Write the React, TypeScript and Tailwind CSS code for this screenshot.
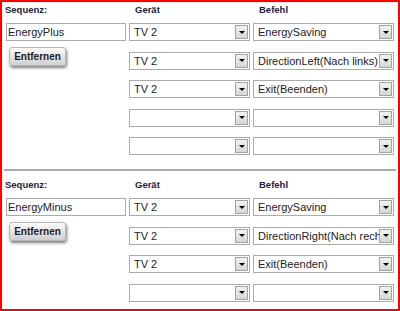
import React from "react";

type Section = {
  name: string;
  rows: { device: string; command: string }[];
};

const sections: Section[] = [
  {
    name: "EnergyPlus",
    rows: [
      { device: "TV 2", command: "EnergySaving" },
      { device: "TV 2", command: "DirectionLeft(Nach links)" },
      { device: "TV 2", command: "Exit(Beenden)" },
      { device: "", command: "" },
      { device: "", command: "" },
    ],
  },
  {
    name: "EnergyMinus",
    rows: [
      { device: "TV 2", command: "EnergySaving" },
      { device: "TV 2", command: "DirectionRight(Nach rechts)" },
      { device: "TV 2", command: "Exit(Beenden)" },
      { device: "", command: "" },
    ],
  },
];

const Header = ({ label, indent }: { label: string; indent: string }) => (
  <div
    className={`h-[21px] pt-[2px] text-[9.5px] font-bold leading-[12px] text-[#1c2340] ${indent}`}
  >
    {label}
  </div>
);

const Select = ({ value }: { value: string }) => (
  <div className="flex h-[18px] items-center border border-[#ababab] bg-white">
    <span className="flex-1 overflow-hidden whitespace-nowrap pl-[4px] text-[11px] leading-[16px] text-[#222]">
      {value}
    </span>
    <span className="mr-[1px] flex h-[14px] w-[13px] shrink-0 items-center justify-center border border-[#a3a3a3] bg-gradient-to-b from-[#f2f2f2] to-[#d6d6d6]">
      <span className="h-0 w-0 border-x-[3px] border-t-[3px] border-x-transparent border-t-black" />
    </span>
  </div>
);

const Block = ({ section }: { section: Section }) => (
  <div className="flex gap-[3px] pl-[4px]">
    <div className="flex w-[120px] flex-col">
      <Header label="Sequenz:" indent="-ml-[1px]" />
      <div className="flex h-[18px] items-center border border-[#ababab] bg-white pl-[1px] text-[11px] leading-[16px] text-[#222]">
        {section.name}
      </div>
      <button className="ml-[3px] mt-[6px] h-[19px] w-[57px] rounded-[3px] border border-[#b8b8b8] bg-gradient-to-b from-[#fbfbfb] to-[#cfcfcf] text-[10px] font-bold leading-[15px] text-[#222] shadow-[1px_2px_3px_rgba(0,0,0,0.5)]">
        Entfernen
      </button>
    </div>
    <div className="flex w-[121px] flex-col">
      <Header label="Gerät" indent="pl-[6px]" />
      <div className="flex flex-col gap-[10.5px]">
        {section.rows.map((r, i) => (
          <Select key={i} value={r.device} />
        ))}
      </div>
    </div>
    <div className="flex w-[141px] flex-col">
      <Header label="Befehl" indent="pl-[6px]" />
      <div className="flex flex-col gap-[10.5px]">
        {section.rows.map((r, i) => (
          <Select key={i} value={r.command} />
        ))}
      </div>
    </div>
  </div>
);

export default function App() {
  return (
    <div
      className="h-[311px] w-[400px] overflow-hidden border-2 border-[#ff0000] bg-white"
      style={{ fontFamily: '"Liberation Sans", Arial, sans-serif' }}
    >
      <Block section={sections[0]} />
      <div className="mx-[2px] mt-[14px] h-[2px] bg-[#ababab]" />
      <div className="pt-[6px]">
        <Block section={sections[1]} />
      </div>
    </div>
  );
}
